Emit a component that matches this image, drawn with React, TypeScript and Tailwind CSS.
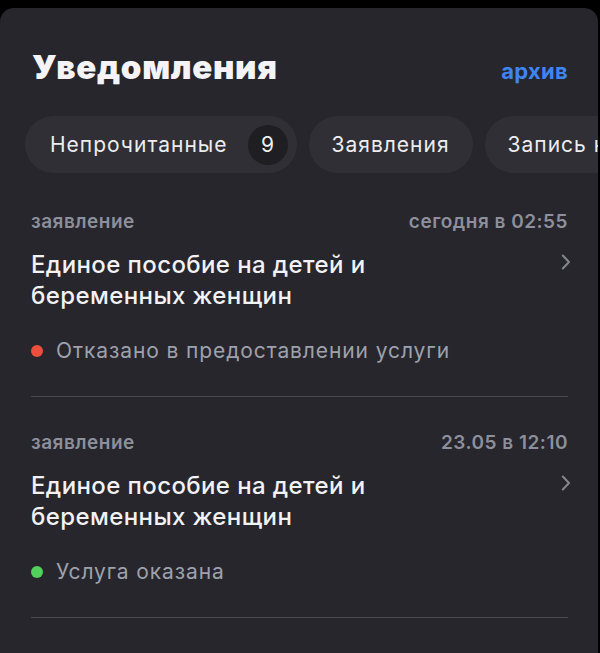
export default function App() {
  const chips = [
    { id: 1, label: "Непрочитанные", count: 9 },
    { id: 2, label: "Заявления" },
    { id: 3, label: "Запись на прием" },
  ];

  const items = [
    {
      id: 1,
      kind: "заявление",
      date: "сегодня в 02:55",
      title: ["Единое пособие на детей и", "беременных женщин"],
      status: "Отказано в предоставлении услуги",
      dot: "bg-[#ec4f3d]",
    },
    {
      id: 2,
      kind: "заявление",
      date: "23.05 в 12:10",
      title: ["Единое пособие на детей и", "беременных женщин"],
      status: "Услуга оказана",
      dot: "bg-[#4fd15c]",
    },
  ];

  return (
    <div className="min-h-[653px] bg-black pt-2 font-['Inter','Noto_Sans',sans-serif] overflow-hidden">
      <div className="w-[598px] min-h-[645px] rounded-t-[14px] bg-[#26262c] overflow-hidden">
        <div className="flex items-baseline justify-between pl-8 pr-[30px] pt-[39px]">
          <h1 className="text-[33px] leading-[40px] font-black text-[#f4f4f6] tracking-[0.7px]">Уведомления</h1>
          <button className="text-[22px] font-bold tracking-[0.3px] text-[#3f85f2]">архив</button>
        </div>

        <div className="mt-[28px] flex gap-[12px] pl-[25px] whitespace-nowrap">
          {chips.map((chip) => (
            <div
              key={chip.id}
              className={`flex h-[57px] shrink-0 items-center rounded-full bg-[#2f2f35] ${chip.count ? "pl-[25px] pr-[9px]" : "px-[23px]"}`}
            >
              <span className="text-[21px] tracking-[1px] text-[#ededf0]">{chip.label}</span>
              {chip.count && (
                <span className="ml-[20px] flex h-[40px] w-[40px] items-center justify-center rounded-full bg-[#1e1e23] text-[21px] text-[#ededf0]">
                  {chip.count}
                </span>
              )}
            </div>
          ))}
        </div>

        <div className="pl-[31px] pr-[30px] pt-[37px]">
          {items.map((item) => (
            <div key={item.id} className="border-b border-[#48484f] pb-[31px] mb-[34px]">
              <div className="flex items-center justify-between text-[19px] leading-[24px] font-semibold tracking-[0.5px] text-[#8d8f9b]">
                <span>{item.kind}</span>
                <span>{item.date}</span>
              </div>
              <div className="mt-[15px] flex items-start justify-between">
                <div className="text-[24px] leading-[31px] font-medium tracking-[0.4px] text-[#f2f2f4]">
                  {item.title.map((line) => (
                    <div key={line}>{line}</div>
                  ))}
                </div>
                <svg width="10" height="16" viewBox="0 0 10 16" className="mt-[5px] -mr-[3px] shrink-0" fill="none">
                  <path d="M1.8 1.5 L8 8 L1.8 14.5" stroke="#85868e" strokeWidth="2" strokeLinecap="round" strokeLinejoin="round" />
                </svg>
              </div>
              <div className="mt-[26px] flex items-center">
                <span className={`h-[12px] w-[12px] rounded-full ${item.dot}`} />
                <span className="ml-[13px] text-[21px] leading-[28px] tracking-[0.9px] text-[#9fa1ad]">{item.status}</span>
              </div>
            </div>
          ))}
        </div>
      </div>
    </div>
  );
}
